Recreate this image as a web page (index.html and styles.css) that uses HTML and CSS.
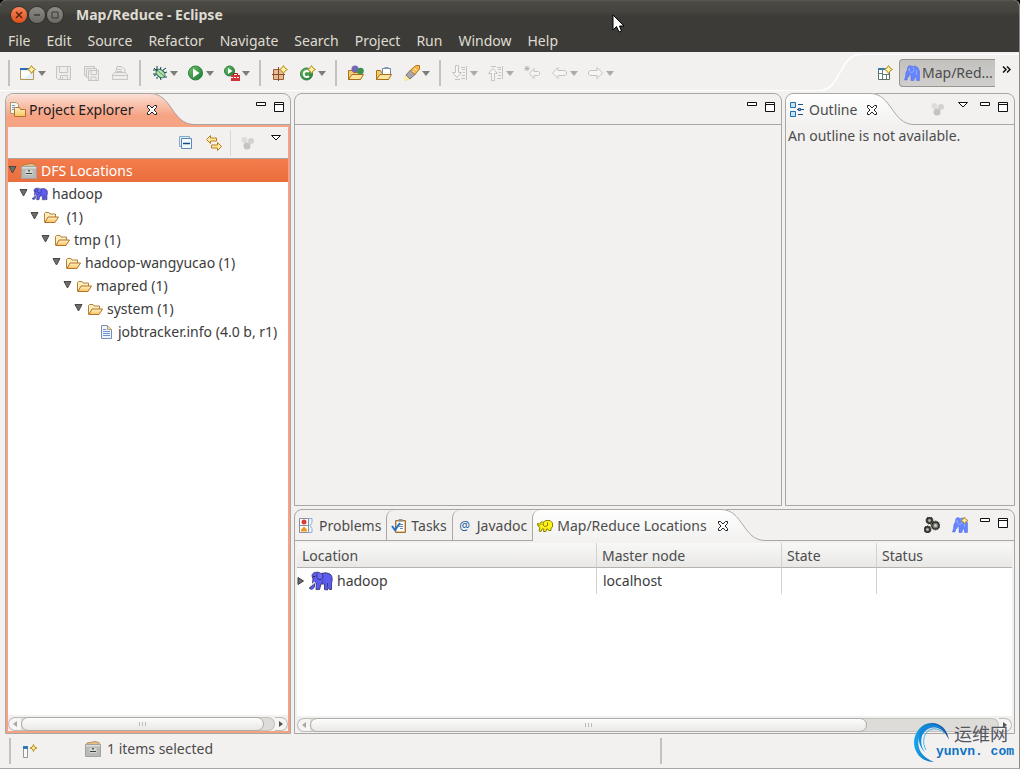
FILE: index.html
```
<!DOCTYPE html>
<html lang="en">
<head>
    <meta charset="UTF-8">
    <meta name="viewport" content="width=device-width, initial-scale=1.0">
    <title>Map/Reduce - Eclipse</title>
    <link rel="stylesheet" href="styles.css">
</head>
<body>
    <!-- Shared icons -->
    <svg class="sprite" aria-hidden="true">
        <defs>
            <linearGradient id="g-folder" x1="0" y1="0" x2="0" y2="1">
                <stop offset="0" stop-color="#fff3c8"/><stop offset="1" stop-color="#f6c35c"/>
            </linearGradient>
            <linearGradient id="g-green" x1="0" y1="0" x2="1" y2="1">
                <stop offset="0" stop-color="#6cc060"/><stop offset="1" stop-color="#1c7a3a"/>
            </linearGradient>
            <linearGradient id="g-orange" x1="0" y1="0" x2="0" y2="1">
                <stop offset="0" stop-color="#fbe0d6"/><stop offset="0.7" stop-color="#f6a383"/><stop offset="1" stop-color="#f6a383"/>
            </linearGradient>
            <linearGradient id="g-white" x1="0" y1="0" x2="0" y2="1">
                <stop offset="0" stop-color="#ffffff"/><stop offset="1" stop-color="#f2f1f0"/>
            </linearGradient>
            <linearGradient id="g-swoosh" x1="0" y1="0" x2="1" y2="0">
                <stop offset="0" stop-color="#16a6ee"/><stop offset="1" stop-color="#0b3f86"/>
            </linearGradient>
        </defs>
        <symbol id="i-arrow" viewBox="0 0 8 16"><path d="M0 6h8L4 11z" fill="#7d7c79"/></symbol>
        <symbol id="i-spark" viewBox="0 0 7 7"><path d="M3.5 0L4.7 2.3 7 3.5 4.7 4.7 3.5 7 2.3 4.7 0 3.5 2.3 2.3z" fill="#fff3b0" stroke="#b8901c" stroke-width="1"/></symbol>
        <symbol id="i-new" viewBox="0 0 16 16">
            <path d="M.5 3.500h13v11H.5z" fill="#e4f1fc" stroke="#b29a52"/>
            <path d="M0 3h10v2H0z" fill="#2f6cb4"/><path d="M1 6h9c0 4-3 7-9 7z" fill="#fff"/>
            <path d="M11.500 .5L13 3l2.500 1.500L13 6l-1.500 2.500L10 6 7.500 4.500 10 3z" fill="#fff2ae" stroke="#b8901c"/>
        </symbol>
        <symbol id="i-save" viewBox="0 0 16 16">
            <g fill="#eeedeb" stroke="#c6c5c2"><path d="M.5 1.500h14v13H2L.5 13z"/><path d="M3.500 1.500h8v6h-8zM4.500 10.500h7v4h-7z"/><path d="M6.500 12v2.500"/></g>
        </symbol>
        <symbol id="i-saveall" viewBox="0 0 16 16">
            <g fill="#eeedeb" stroke="#c6c5c2"><path d="M.5 1.500h10v9H.5z"/><path d="M2.500 3.500h10v9h-10z"/><path d="M4.500 5.500h10v10h-10z"/><path d="M7 5.500h5.500v4H7zM7 12h5v3.500H7z"/></g>
        </symbol>
        <symbol id="i-print" viewBox="0 0 16 16">
            <g fill="#eeedeb" stroke="#c6c5c2"><path d="M3.500 8.500L5 1.500h5l3 3v4z"/><path d="M.5 9.500l2-2h11l2 2v5H.5z"/><path d="M.5 10.500h15M5.500 4.500h4M5 6.500h5"/></g>
        </symbol>
        <symbol id="i-bug" viewBox="0 0 16 16">
            <path d="M5 1v4M1 5h4M1 9h4l-3 2M9 2l-1 3M12 8l3-1M8 12l1 3M12 12h3M5 12v2M2 3l3 3M11 5l3-2" stroke="#17474c" fill="none"/>
            <ellipse cx="8.500" cy="8.500" rx="5" ry="3.600" transform="rotate(40 8.500 8.500)" fill="#b9e0a0" stroke="#1d6a68"/>
            <path d="M4 4l2 .5L5 7z" fill="#17474c"/><path d="M6 6l6 5" stroke="#5b9c7c"/>
        </symbol>
        <symbol id="i-run" viewBox="0 0 16 16"><circle cx="7.500" cy="8" r="7" fill="url(#g-green)" stroke="#2c7f40"/><path d="M5 3.500L11.500 8 5 12.500z" fill="#fff"/></symbol>
        <symbol id="i-ext" viewBox="0 0 16 16">
            <circle cx="5.500" cy="6" r="5" fill="url(#g-green)" stroke="#2c7f40"/><path d="M4 3l4.500 3L4 9z" fill="#fff"/>
            <path d="M9.500 10V8.500h4V10" fill="none" stroke="#a81d1d"/><path d="M7 10h9v6H7z" fill="#cf3434"/><path d="M7 12.500h9" stroke="#fff" stroke-dasharray="2 1"/>
        </symbol>
        <symbol id="i-package" viewBox="0 0 16 16">
            <path d="M1.500 4.500h10v10h-10z" fill="#e5bd90" stroke="#9a5a34"/><path d="M6.500 2v14M0 9.500h13" stroke="#8a4a2c"/>
            <path d="M11.500 .5L13 3l2.500 1.500L13 6l-1.500 2.500L10 6 7.500 4.500 10 3z" fill="#fff2ae" stroke="#b8901c"/>
        </symbol>
        <symbol id="i-class" viewBox="0 0 16 16">
            <circle cx="6.500" cy="9" r="6" fill="url(#g-green)" stroke="#2c7f40"/><path d="M9 7a3 3 0 1 0 0 4" fill="none" stroke="#fff" stroke-width="2"/>
            <path d="M11.500 .5L13 3l2.500 1.500L13 6l-1.500 2.500L10 6 7.500 4.500 10 3z" fill="#fff2ae" stroke="#b8901c"/>
        </symbol>
        <symbol id="i-opentype" viewBox="0 0 16 16">
            <path d="M.5 14.500v-9h4l1 2h7v7z" fill="#f3cb70" stroke="#a8701c"/>
            <circle cx="7" cy="4" r="3.500" fill="#7468b4"/><circle cx="12.500" cy="6" r="3.300" fill="#3b9250"/>
            <path d="M.5 14.500L4 9.500h11.500l-3 5z" fill="#fbe3a0" stroke="#a8701c"/>
        </symbol>
        <symbol id="i-opentask" viewBox="0 0 16 16">
            <path d="M.5 14.500v-9h4l1 2h7v7z" fill="#f3cb70" stroke="#a8701c"/>
            <path d="M6.500 3.500h8v7h-8z" fill="#fff" stroke="#6d83a8"/><path d="M8.500 2h4v2h-4z" fill="#8598b8"/>
            <path d="M.5 14.500L4 9.500h11.500l-3 5z" fill="#fbe3a0" stroke="#a8701c"/>
        </symbol>
        <symbol id="i-search" viewBox="0 0 16 16">
            <path d="M0 16l1.500-6 4.500 4z" fill="#fff3a4" stroke="#ecd77c" stroke-width=".5"/><path d="M2 10l4.500-5 4.500 4.500-5 4.500z" fill="#a9a7ad" stroke="#77747c"/>
            <path d="M6.500 5L12 .5h3.500V4L11 9.500z" fill="#f5b94c" stroke="#b5761c"/><path d="M10.500 3.500l2 2M8.500 6l1.500 1.500" stroke="#fff"/>
        </symbol>
        <symbol id="i-next" viewBox="0 0 16 16"><g fill="#f6f5f4" stroke="#c4c3c0"><path d="M3.500 .5h3v7h3L5 12.500.5 7.500h3z"/><path d="M9 2.500h4M10 4.500h3M11 7.500h2M10 10.500h3M9 13.500h4M14.500 1v14M3 14.500h5"/></g></symbol>
        <symbol id="i-prev" viewBox="0 0 16 16"><g fill="#f6f5f4" stroke="#c4c3c0"><path d="M3.500 15.500h3v-7h3L5 3.500.5 8.500h3z"/><path d="M9 13.500h4M10 10.500h3M11 7.500h2M10 4.500h3M9 2.500h4M14.500 1v13M3 1.500h5"/></g></symbol>
        <symbol id="i-lastedit" viewBox="0 0 16 16"><path d="M5.500 8.500L10 3.500v3h4.500l1 1v2l-1 1H10v3z" fill="#f6f5f4" stroke="#c4c3c0"/><path d="M3 1v5M.5 3.500h5M1 1.500l4 4M5 1.500l-4 4" stroke="#b2b1ae"/></symbol>
        <symbol id="i-back" viewBox="0 0 16 16"><path d="M.5 8L6 2.500v3h7l1.500 1.500v2L13 10.500H6v3z" fill="#f6f5f4" stroke="#c4c3c0"/></symbol>
        <symbol id="i-fwd" viewBox="0 0 16 16"><path d="M14.500 8L9 2.500v3H2L.5 7v2L2 10.500h7v3z" fill="#f6f5f4" stroke="#c4c3c0"/></symbol>
        <symbol id="i-persp" viewBox="0 0 16 16">
            <path d="M1.500 3.500h11v11h-11z" fill="#fff" stroke="#5c6f62"/><path d="M1 3h8v2H1z" fill="#3c77b4"/><path d="M5.500 5v9M5.500 9.500h7M9.500 9.500v5M2 8.500h3" stroke="#5c8277"/>
            <path d="M11.500 .5L13 3l2.500 1.500L13 6l-1.500 2.500L10 6 7.500 4.500 10 3z" fill="#fff2ae" stroke="#b8901c"/>
        </symbol>
        <symbol id="i-elephant" viewBox="0 0 24 20">
            <path d="M6 1.500C4 2 3 3 3 5l1 3-.5 5c0 2-1 3-2.500 3L.5 17.500c2 1.500 4.500.5 5-2.500l.5-4 1.500 1L7 18.500h3.500L12 13h3.500v5.500l3 .5.500-2.500 1.500 2h2V12c1-3 1-6-.5-8-1.500-1.500-4-2.500-7-2l-3 .5C10 1 8 1 6 1.500z" fill="#5d5cf2" stroke="#34356c" stroke-width=".9"/>
            <path d="M8.500 2.500C7 5 8 8.500 11 8.500s3.500-3 2-6" fill="#6a69f6" stroke="#2d2e60" stroke-width=".9"/>
            <path d="M12.500 12.500c1-1 1.500-2 1.500-3M18.500 16v-4" fill="none" stroke="#34356c" stroke-width=".8"/><path d="M4.500 5.500H6" stroke="#15162c"/><path d="M6 11l-3 2.500" stroke="#f4f4f4" stroke-width="1.300"/>
        </symbol>
        <symbol id="i-elephant-up" viewBox="0 0 16 16">
            <path d="M4 1.500L6 .5l2 1 3.500-.5L14 3l1.500 3v9.500h-3L12 12h-1.500l-.5 3.500H7V10L5.500 9 5 11.500H4L3 15H.5l1-3.500L2 7l1-1z" fill="#6485ff" stroke="#4a66e0" stroke-width=".5"/>
            <path d="M5.500 3c-.5 3 .5 4.500 2.500 4.500S10.500 4 9 2M12.500 5v5M4 4.500h1" fill="none" stroke="#a2b5ff" stroke-width=".8"/>
        </symbol>
        <symbol id="i-hadoop" viewBox="0 0 16 16">
            <path d="M.5 5.500l2 .5L4 4h2.500L9 2.500h4l2.500 2.500v4L14 10v2.500h-2.500L11 11H9.500l-.5 2.500H6.500L7 11H5l-1 2.500-2-.5 1-3.500L1 8z" fill="#fff21a" stroke="#8c8400"/>
            <path d="M6.500 4.500c-1 2 0 4 2 4s2.500-2 2-4M4 6v1M1.500 7l1 .5" fill="none" stroke="#7e7700"/>
        </symbol>
        <symbol id="i-folder" viewBox="0 0 16 16">
            <path d="M1.500 13.500v-9l1-1H6l1 1.500h5.500v3" fill="#fdeebd" stroke="#b5803a"/><path d="M2 13.500L5 8h10.500L12 13.500z" fill="url(#g-folder)" stroke="#b5702a"/>
        </symbol>
        <symbol id="i-file" viewBox="0 0 16 16">
            <path d="M3.500 1.500h6l4 4v9h-10z" fill="#eef4fd" stroke="#7c8cb0"/><path d="M9.500 1.500v4h4" fill="#f1d9a0" stroke="#b89f60"/>
            <path d="M5 5.500h3M5 7.500h7M5 9.500h7M5 11.500h7" stroke="#6f92d0"/>
        </symbol>
        <symbol id="i-drawer" viewBox="0 0 16 16">
            <path d="M1 4l1-2 8-1.500 4 1L15 4z" fill="#e6c084" stroke="#8c6c3c" stroke-width=".6"/><path d="M.5 3.500h15v12H.5z" fill="#b9bab7" stroke="#a2a39f"/><path d="M1 4h14v1.500H1z" fill="#dddedb"/>
            <path d="M4.500 7h7v5h-7z" fill="#d6d7d4"/><path d="M5 10.500h6" stroke="#3a463c" stroke-width="1"/><path d="M7 7h2v1.500H7z" fill="#3c6e46"/>
        </symbol>
        <symbol id="i-explorer" viewBox="0 0 16 16">
            <path d="M.5 .5h6l2 2v9h-8z" fill="#f7f5e8" stroke="#a49a78"/><path d="M2 3.500h3M2 5.500h3M2 7.500h2" stroke="#7898c8"/>
            <path d="M4.500 14.500v-8l1-1h4l1 2h5v7z" fill="url(#g-folder)" stroke="#b5702a"/>
        </symbol>
        <symbol id="i-outline" viewBox="0 0 16 16">
            <path d="M.5 .5h5v5h-5zM.5 9.500h5v5h-5z" fill="#c4e4f8" stroke="#1f6fa8"/><path d="M8 2.500h5M7 7.500h1M11 7.500h3M8 12.500h5" stroke="#1d4f84"/><path d="M8.500 6.500h2v2h-2z" fill="#9fd0f0" stroke="#1d4f84"/>
        </symbol>
        <symbol id="i-collapse" viewBox="0 0 16 16"><path d="M1.500 1.500h10v10h-10z" fill="#dcecf8" stroke="#85aacb"/><path d="M3.500 3.500h10v10h-10z" fill="#f2fbff" stroke="#5c89b4"/><path d="M5 8.500h7" stroke="#124a84" stroke-width="1.500"/></symbol>
        <symbol id="i-link" viewBox="0 0 16 16"><g fill="#ffeaa6" stroke="#bb7f16"><path d="M.5 4.500l4-4v2.500h6v3h-6v2.500z"/><path d="M15.500 11.500l-4-4V10h-6v3h6v2.500z"/></g></symbol>
        <symbol id="i-focus" viewBox="0 0 16 16"><circle cx="4.500" cy="5" r="3" fill="#dddcda"/><circle cx="11" cy="6" r="3" fill="#d2d1cf"/><circle cx="7" cy="11" r="3.500" fill="#c4c3c1"/></symbol>
        <symbol id="i-problems" viewBox="0 0 16 16">
            <path d="M.5 .5h9v14h-9z" fill="#fff" stroke="#8a8f9c"/><path d="M0 7.500h10" stroke="#8a8f9c"/><path d="M10 .5h3v4l-2 3 2 3v4h-3" fill="#eaf2fb" stroke="#8fb0dc"/>
            <circle cx="5" cy="4" r="2.500" fill="#d93a3a"/><path d="M5 8.500l3 3v2H2v-2z" fill="#f0981c"/>
        </symbol>
        <symbol id="i-tasks" viewBox="0 0 16 16">
            <path d="M4.500 2.500h10v12h-10z" fill="#e8c28e" stroke="#98743c"/><path d="M6 4h7v9H6z" fill="#fff"/><path d="M7.500 1h4v2.500h-4z" fill="#8a94a8"/><path d="M9 6.500h3M8 8.500h4M9 10.500h3" stroke="#6a86b4"/>
            <path d="M1 8l3 4 5-7" fill="none" stroke="#1b6fc8" stroke-width="2"/>
        </symbol>
        <symbol id="i-gears" viewBox="0 0 16 16">
            <g fill="#777870" stroke="#2e2e2a" stroke-width="1.500"><circle cx="5.500" cy="3.500" r="2.700"/><circle cx="11.500" cy="8.500" r="3.600"/><circle cx="3.500" cy="12.500" r="2.700"/></g>
            <g fill="none" stroke="#2e2e2a" stroke-dasharray="1 1"><circle cx="5.500" cy="3.500" r="3.600"/><circle cx="11.500" cy="8.500" r="4.500"/><circle cx="3.500" cy="12.500" r="3.600"/></g>
            <g fill="#c8c8bc"><circle cx="5.500" cy="3.500" r="1"/><circle cx="11.500" cy="8.500" r="1.500"/><circle cx="3.500" cy="12.500" r="1"/></g>
        </symbol>
        <symbol id="i-fastview" viewBox="0 0 16 16">
            <path d="M1.500 4.500h4v10h-4z" fill="#f4fafe" stroke="#9a9884"/><path d="M1 3h5v3H1z" fill="#3476b8"/>
            <path d="M11.500 1.500L12.500 4l2.500 1-2.500 1-1 2.500-1-2.500L8 5l2.500-1z" fill="#fff2ae" stroke="#b8901c"/>
        </symbol>
        <symbol id="i-close" viewBox="0 0 12 12"><path d="M1.500 1.500h2l2.500 2.500 2.500-2.500h2v2L8 6l2.500 2.500v2h-2L6 8l-2.500 2.500h-2v-2L4 6 1.500 3.500z" fill="#fff" stroke="#222"/></symbol>
        <symbol id="i-min" viewBox="0 0 10 12"><path d="M.5 1.500h9v3h-9z" fill="#fff" stroke="#111"/></symbol>
        <symbol id="i-max" viewBox="0 0 10 12"><path d="M.5 1.500h9v9h-9zM.5 3.500h9" fill="#fff" stroke="#111"/></symbol>
        <symbol id="i-menu" viewBox="0 0 10 12"><path d="M.5 1.500h9L5 6z" fill="#fff" stroke="#111"/></symbol>
        <symbol id="i-open" viewBox="0 0 13 16"><path d="M1 5.500h7L4.500 12z" fill="#6e6d6a" stroke="#4a4946"/></symbol>
    </svg>

    <div class="window">
        <header class="titlebar">
            <div class="title-row">
                <button class="wm wm-close" aria-label="Close"><svg viewBox="0 0 16 16"><path d="M5 5l6 6M11 5l-6 6" stroke="#5a2410" stroke-width="1.500"/></svg></button>
                <button class="wm" aria-label="Minimize"><svg viewBox="0 0 16 16"><path d="M5 8h6" stroke="#3c3b37" stroke-width="1.500"/></svg></button>
                <button class="wm" aria-label="Maximize"><svg viewBox="0 0 16 16"><path d="M5 5h6v6H5z" fill="none" stroke="#3c3b37"/></svg></button>
                <h1>Map/Reduce - Eclipse</h1>
            </div>
            <nav class="menubar">
                <button>File</button>
                <button>Edit</button>
                <button>Source</button>
                <button>Refactor</button>
                <button>Navigate</button>
                <button>Search</button>
                <button>Project</button>
                <button>Run</button>
                <button>Window</button>
                <button>Help</button>
            </nav>
        </header>

        <div class="toolbar">
            <div class="tools">
                <div class="tool-group">
                    <button class="tool drop" aria-label="New"><svg class="ico"><use href="#i-new"/></svg><svg class="arr"><use href="#i-arrow"/></svg></button>
                    <button class="tool" aria-label="Save"><svg class="ico"><use href="#i-save"/></svg></button>
                    <button class="tool" aria-label="Save All"><svg class="ico"><use href="#i-saveall"/></svg></button>
                    <button class="tool" aria-label="Print"><svg class="ico"><use href="#i-print"/></svg></button>
                </div>
                <div class="tool-group">
                    <button class="tool drop" aria-label="Debug"><svg class="ico"><use href="#i-bug"/></svg><svg class="arr"><use href="#i-arrow"/></svg></button>
                    <button class="tool drop" aria-label="Run"><svg class="ico"><use href="#i-run"/></svg><svg class="arr"><use href="#i-arrow"/></svg></button>
                    <button class="tool drop" aria-label="External Tools"><svg class="ico"><use href="#i-ext"/></svg><svg class="arr"><use href="#i-arrow"/></svg></button>
                </div>
                <div class="tool-group">
                    <button class="tool" aria-label="New Package"><svg class="ico"><use href="#i-package"/></svg></button>
                    <button class="tool drop" aria-label="New Class"><svg class="ico"><use href="#i-class"/></svg><svg class="arr"><use href="#i-arrow"/></svg></button>
                </div>
                <div class="tool-group">
                    <button class="tool" aria-label="Open Type"><svg class="ico"><use href="#i-opentype"/></svg></button>
                    <button class="tool" aria-label="Open Task"><svg class="ico"><use href="#i-opentask"/></svg></button>
                    <button class="tool drop" aria-label="Search"><svg class="ico"><use href="#i-search"/></svg><svg class="arr"><use href="#i-arrow"/></svg></button>
                </div>
                <div class="tool-group">
                    <button class="tool drop off" aria-label="Next Annotation"><svg class="ico"><use href="#i-next"/></svg><svg class="arr"><use href="#i-arrow"/></svg></button>
                    <button class="tool drop off" aria-label="Previous Annotation"><svg class="ico"><use href="#i-prev"/></svg><svg class="arr"><use href="#i-arrow"/></svg></button>
                    <button class="tool" aria-label="Last Edit Location"><svg class="ico"><use href="#i-lastedit"/></svg></button>
                    <button class="tool drop off" aria-label="Back"><svg class="ico"><use href="#i-back"/></svg><svg class="arr"><use href="#i-arrow"/></svg></button>
                    <button class="tool drop off" aria-label="Forward"><svg class="ico"><use href="#i-fwd"/></svg><svg class="arr"><use href="#i-arrow"/></svg></button>
                </div>
            </div>
            <svg class="bar-curve" viewBox="0 0 40 41"><path d="M0 38.500C20 38.500 20 2.500 40 2.500" fill="none" stroke="#fff" stroke-width="1.500"/></svg>
            <div class="perspectives">
                <button class="tool" aria-label="Open Perspective"><svg class="ico"><use href="#i-persp"/></svg></button>
                <button class="persp"><svg class="ico"><use href="#i-elephant-up"/></svg><span>Map/Red...</span></button>
                <button class="more" aria-label="More perspectives"><svg viewBox="0 0 9 7"><path d="M1 .5l3 3-3 3M5 .5l3 3-3 3" fill="none" stroke="#111" stroke-width="1.500"/></svg></button>
            </div>
        </div>

        <main class="workbench">
            <section class="panel explorer">
                <div class="tabs">
                    <div class="tab active">
                        <svg class="slope" viewBox="0 0 44 32"><path d="M0 0C22 0 22 31 44 31v1H0z" fill="url(#g-orange)"/><path d="M0 .5C22 .5 22 31.500 44 31.500" fill="none" stroke="#a9a7a4"/></svg>
                        <svg class="ico"><use href="#i-explorer"/></svg><span>Project Explorer</span>
                        <button class="close" aria-label="Close"><svg><use href="#i-close"/></svg></button>
                    </div>
                    <div class="actions">
                        <button aria-label="Minimize"><svg><use href="#i-min"/></svg></button>
                        <button aria-label="Maximize"><svg><use href="#i-max"/></svg></button>
                    </div>
                </div>
                <div class="explorer-body">
                    <div class="view-tools">
                        <button class="tool" aria-label="Collapse All"><svg class="ico"><use href="#i-collapse"/></svg></button>
                        <button class="tool" aria-label="Link with Editor"><svg class="ico"><use href="#i-link"/></svg></button>
                        <span class="divider"></span>
                        <button class="tool" aria-label="Focus"><svg class="ico"><use href="#i-focus"/></svg></button>
                        <button class="tool view-menu" aria-label="View Menu"><svg><use href="#i-menu"/></svg></button>
                    </div>
                    <ul class="tree">
                        <li><div class="row selected"><svg class="twist"><use href="#i-open"/></svg><svg class="ico"><use href="#i-drawer"/></svg><span>DFS Locations</span></div>
                        <ul><li><div class="row"><svg class="twist"><use href="#i-open"/></svg><svg class="ico"><use href="#i-elephant"/></svg><span>hadoop</span></div>
                        <ul><li><div class="row"><svg class="twist"><use href="#i-open"/></svg><svg class="ico"><use href="#i-folder"/></svg><span>&nbsp;(1)</span></div>
                        <ul><li><div class="row"><svg class="twist"><use href="#i-open"/></svg><svg class="ico"><use href="#i-folder"/></svg><span>tmp (1)</span></div>
                        <ul><li><div class="row"><svg class="twist"><use href="#i-open"/></svg><svg class="ico"><use href="#i-folder"/></svg><span>hadoop-wangyucao (1)</span></div>
                        <ul><li><div class="row"><svg class="twist"><use href="#i-open"/></svg><svg class="ico"><use href="#i-folder"/></svg><span>mapred (1)</span></div>
                        <ul><li><div class="row"><svg class="twist"><use href="#i-open"/></svg><svg class="ico"><use href="#i-folder"/></svg><span>system (1)</span></div>
                        <ul><li><div class="row"><svg class="twist"></svg><svg class="ico"><use href="#i-file"/></svg><span>jobtracker.info (4.0 b, r1)</span></div></li></ul>
                        </li></ul></li></ul></li></ul></li></ul></li></ul></li></ul></li>
                    </ul>
                    <div class="scrollbar">
                        <span class="cap left"></span>
                        <span class="track"><span class="thumb wide"></span></span>
                        <span class="cap right"></span>
                    </div>
                </div>
            </section>

            <section class="panel editor">
                <div class="tabs">
                    <div class="actions">
                        <button aria-label="Minimize"><svg><use href="#i-min"/></svg></button>
                        <button aria-label="Maximize"><svg><use href="#i-max"/></svg></button>
                    </div>
                </div>
            </section>

            <section class="panel outline">
                <div class="tabs">
                    <div class="tab active">
                        <svg class="slope" viewBox="0 0 44 32"><path d="M0 0C22 0 22 31 44 31v1H0z" fill="url(#g-white)"/><path d="M0 .5C22 .5 22 31.500 44 31.500" fill="none" stroke="#a9a7a4"/></svg>
                        <svg class="ico"><use href="#i-outline"/></svg><span>Outline</span>
                        <button class="close" aria-label="Close"><svg><use href="#i-close"/></svg></button>
                    </div>
                    <div class="actions">
                        <button class="big last" aria-label="Focus"><svg><use href="#i-focus"/></svg></button>
                        <button aria-label="View Menu"><svg><use href="#i-menu"/></svg></button>
                        <button class="apart" aria-label="Minimize"><svg><use href="#i-min"/></svg></button>
                        <button aria-label="Maximize"><svg><use href="#i-max"/></svg></button>
                    </div>
                </div>
                <p>An outline is not available.</p>
            </section>

            <section class="panel locations">
                <div class="tabs">
                    <button class="tab"><svg class="ico"><use href="#i-problems"/></svg><span>Problems</span></button>
                    <button class="tab"><svg class="ico"><use href="#i-tasks"/></svg><span>Tasks</span></button>
                    <button class="tab"><span class="at">@</span><span>Javadoc</span></button>
                    <div class="tab active">
                        <svg class="slope" viewBox="0 0 44 32"><path d="M0 0C22 0 22 31 44 31v1H0z" fill="url(#g-white)"/><path d="M0 .5C22 .5 22 31.500 44 31.500" fill="none" stroke="#a9a7a4"/></svg>
                        <svg class="ico"><use href="#i-hadoop"/></svg><span>Map/Reduce Locations</span>
                        <button class="close" aria-label="Close"><svg><use href="#i-close"/></svg></button>
                    </div>
                    <div class="actions">
                        <button class="big" aria-label="Edit Hadoop location"><svg><use href="#i-gears"/></svg></button>
                        <button class="big last" aria-label="New Hadoop location"><svg viewBox="0 0 16 16"><use href="#i-elephant-up"/><use href="#i-spark" x="9" y="0" width="7" height="7"/></svg></button>
                        <button aria-label="Minimize"><svg><use href="#i-min"/></svg></button>
                        <button aria-label="Maximize"><svg><use href="#i-max"/></svg></button>
                    </div>
                </div>
                <div class="table-wrap">
                    <table>
                        <thead>
                            <tr><th class="c-loc">Location</th><th class="c-master">Master node</th><th class="c-state">State</th><th>Status</th></tr>
                        </thead>
                        <tbody>
                            <tr>
                                <td><div class="loc"><svg class="shut" viewBox="0 0 8 10"><path d="M1 1.500v7L6.500 5z" fill="#6e6d6a" stroke="#3a3936"/></svg><svg class="eleph"><use href="#i-elephant"/></svg><span>hadoop</span></div></td>
                                <td>localhost</td>
                                <td></td>
                                <td></td>
                            </tr>
                        </tbody>
                    </table>
                </div>
                <div class="scrollbar">
                    <span class="cap left"></span>
                    <span class="track"><span class="thumb"></span></span>
                    <span class="cap right"></span>
                </div>
            </section>
        </main>

        <footer class="statusbar">
            <div class="status-cell fast"><button class="tool" aria-label="Show View as a Fast View"><svg class="ico"><use href="#i-fastview"/></svg></button></div>
            <div class="status-text"><svg class="ico"><use href="#i-drawer"/></svg><span>1 items selected</span></div>
            <div class="status-cell rest"></div>
        </footer>
    </div>

    <div class="watermark">
        <svg viewBox="0 0 40 42">
            <path d="M36 19C34 6 24-1 13 3 3 7-2 20 3 30c3 7 10 11 18 11C10 37 3 28 6 17 10 4 28 0 36 19z" fill="url(#g-swoosh)"/>
            <path d="M33 12C26 3 13 5 9 15c-2 7 0 13 4 17-7-6-9-14-5-22C13 1 27 1 33 12z" fill="#1487dc"/>
            <path d="M31 12C24 5 13 7 11 17c-1 5 0 8 2 12" fill="none" stroke="#4ab8f2"/>
        </svg>
        <div class="wm-text"><span class="cn">运维网</span><span class="site">yunvn. com</span></div>
    </div>
    <svg class="cursor" viewBox="0 0 13 20"><path d="M1 1v15l3.500-3.500L7 18l2.500-1L7.500 12H12z" fill="#fff" stroke="#000"/></svg>
</body>
</html>
```
FILE: styles.css
```
* {
    box-sizing: border-box;
}
body {
    margin: 0;
    background: #000;
    color: #4c4c4c;
    font-family: "Noto Sans", "Open Sans", sans-serif;
    font-size: 14px;
    line-height: 20px;
}
button {
    margin: 0;
    padding: 0;
    border: none;
    background: none;
    color: inherit;
    font: inherit;
}
svg {
    display: block;
    flex: none;
}
.sprite {
    position: absolute;
    width: 0;
    height: 0;
}
.ico {
    width: 16px;
    height: 16px;
}
.window {
    display: flex;
    flex-direction: column;
    height: 100vh;
    background: #f2f1f0;
    border-right: 1px solid #8b8985;
    border-bottom: 1px solid #aaa8a4;
    border-radius: 6px 6px 0 0;
    overflow: hidden;
}

/* Title and menu */
.titlebar {
    background: linear-gradient(#5a5955 0, #4a4944 2px, #45443f 12px, #3c3b37 16px);
    color: #dfdbd2;
}
.title-row {
    display: flex;
    align-items: center;
    gap: 2px;
    height: 30px;
    padding-left: 11px;
}
.wm {
    width: 16px;
    height: 16px;
    border-radius: 50%;
    background: linear-gradient(#8b8a83, #6a6962);
    box-shadow: 0 0 0 1px #33322e;
}
.wm-close {
    background: linear-gradient(#f88458, #e0501c);
}
h1 {
    margin: 0 0 0 11px;
    font-size: 14px;
    font-weight: bold;
}
.menubar {
    display: flex;
    gap: 16px;
    height: 22px;
    padding-left: 8px;
}

/* Main toolbar */
.toolbar {
    display: flex;
    height: 41px;
}
.tools {
    display: flex;
    flex: 1;
    align-items: center;
    gap: 12px;
    height: 39px;
    padding: 4px 0 0 8px;
    border-bottom: 1px solid #fff;
}
.tool-group {
    display: flex;
    align-items: center;
    gap: 12px;
    height: 26px;
    padding-left: 10px;
    border-left: 2px solid #c4c2bf;
}
.tool-group + .tool-group {
    margin-left: -1px;
    padding-left: 11px;
}
.tool {
    display: flex;
    align-items: center;
    gap: 2px;
}
.drop {
    width: 24px;
}
.arr {
    width: 8px;
    height: 16px;
}
.off .arr {
    opacity: 0.6;
}
.bar-curve {
    width: 40px;
    height: 41px;
}
.perspectives {
    display: flex;
    align-items: center;
    height: 39px;
    margin-top: 2px;
    padding: 0 8px 0 17px;
    border-top: 1px solid #fff;
}
.persp {
    display: flex;
    align-items: center;
    gap: 2px;
    width: 96px;
    height: 28px;
    margin: 0 7px 2px 6px;
    padding-left: 4px;
    border: 1px solid #96948f;
    border-right: none;
    border-radius: 4px 0 0 4px;
    background: linear-gradient(#c2c1be, #d0cfcd);
    overflow: hidden;
    white-space: nowrap;
}
.perspectives .tool {
    margin-bottom: 2px;
}
.more {
    width: 9px;
    margin-bottom: 10px;
}

/* Panels */
.workbench {
    display: grid;
    flex: 1;
    grid-template-columns: 286fr 488fr 230fr;
    grid-template-rows: 413fr 225fr;
    gap: 3px;
    min-height: 0;
    padding: 0 4px 0 5px;
}
.panel {
    display: flex;
    flex-direction: column;
    min-width: 0;
    min-height: 0;
    border: 1px solid #a9a7a4;
    border-radius: 8px 8px 0 0;
}
.explorer {
    grid-row: 1 / 3;
}
.locations {
    grid-column: 2 / 4;
}
.tabs {
    display: flex;
    flex: none;
    height: 31px;
    border-bottom: 1px solid #a9a7a4;
}
.tab {
    display: flex;
    align-items: center;
    gap: 3px;
    height: 31px;
    padding: 0 5px 0 4px;
    white-space: nowrap;
}
.tab + .tab {
    border-left: 1px solid #a9a7a4;
    border-top-left-radius: 8px;
}
.tab.active {
    position: relative;
    padding-right: 0;
    border-top-left-radius: 8px;
    background: linear-gradient(#fff, #f2f1f0);
}
.tab.active > * {
    z-index: 1;
}
.tab.active > .slope {
    position: absolute;
    left: calc(100% - 8px);
    top: -1px;
    z-index: 0;
    width: 44px;
    height: 32px;
}
.locations .tab {
    gap: 4px;
}
.explorer .tab.active {
    background: linear-gradient(#fbe0d6, #f6a383 70%);
    color: #1c1c1c;
}
.close {
    width: 12px;
    margin-left: 6px;
}
.close svg {
    width: 12px;
    height: 12px;
}
.explorer .close {
    margin-left: 10px;
}
.at {
    width: 16px;
    color: #1f5f9c;
    font-size: 12px;
    text-align: center;
}
.actions {
    display: flex;
    gap: 8px;
    margin-left: auto;
    padding: 7px 6px 0 0;
}
.actions button {
    width: 10px;
    height: 12px;
}
.actions button svg {
    width: 10px;
    height: 12px;
}
.actions .big {
    width: 16px;
    height: 16px;
    margin-right: 4px;
}
.actions .big svg {
    width: 16px;
    height: 16px;
}
.actions .apart,
.actions .last + button {
    margin-left: 4px;
}
.actions .last {
    margin-right: 0;
}
.outline p {
    margin: 0;
    padding: 1px 2px;
}

/* Project Explorer */
.explorer-body {
    display: flex;
    flex: 1;
    flex-direction: column;
    min-height: 0;
    border: 2px solid #f6a383;
    background: #fff;
}
.view-tools {
    display: flex;
    flex: none;
    align-items: center;
    justify-content: flex-end;
    gap: 12px;
    height: 32px;
    padding-right: 7px;
    border-bottom: 1px solid #a9a7a4;
    background: #f2f1f0;
}
.divider {
    width: 1px;
    height: 26px;
    margin: 0 -3px 0 -4px;
    background: #dad8d5;
}
.view-menu svg {
    width: 10px;
    height: 12px;
}
.view-menu {
    margin-bottom: 6px;
    margin-left: 3px;
}
.tree {
    flex: 1;
    min-height: 0;
    overflow: hidden;
    color: #3c3c3c;
}
.tree,
.tree ul {
    margin: 0;
    padding: 0;
    list-style: none;
}
.tree ul {
    padding-left: 11px;
}
.row {
    display: flex;
    align-items: center;
    height: 23px;
    white-space: nowrap;
}
.row span {
    margin-left: 4px;
}
.twist {
    width: 13px;
    height: 16px;
    margin-bottom: 4px;
}
.selected {
    background: linear-gradient(#f47c4c, #ea6e3c);
    color: #fff;
}

/* Scrollbars */
.scrollbar {
    display: flex;
    flex: none;
    height: 16px;
    padding-top: 2px;
    background: #f2f1f0;
}
.cap {
    display: flex;
    align-items: center;
    justify-content: center;
    width: 13px;
    border: 1px solid #bdbbb8;
    background: #f6f5f4;
}
.cap.left {
    border-right: none;
    border-radius: 7px 0 0 7px;
}
.cap.right {
    border-left: none;
    border-radius: 0 7px 7px 0;
}
.cap::before {
    border: 3px solid transparent;
    content: "";
}
.cap.left::before {
    margin-right: 3px;
    border-right: 4px solid #aaa8a5;
}
.cap.right::before {
    margin-left: 3px;
    border-left: 4px solid #55534f;
}
.track {
    flex: 1;
    border: 1px solid #c4c2bf;
    border-left: none;
    border-radius: 0 7px 7px 0;
    background: #dddcd9;
}
.thumb {
    display: flex;
    align-items: center;
    justify-content: center;
    width: 81%;
    height: 14px;
    margin-top: -1px;
    border: 1px solid #aeaca9;
    border-radius: 7px;
    background: linear-gradient(#fdfdfd, #e9e8e6);
}
.thumb.wide {
    width: 96%;
}
.thumb::before {
    width: 7px;
    height: 4px;
    background: repeating-linear-gradient(90deg, #bcbab7 0 1px, transparent 1px 3px);
    content: "";
}

/* Locations table */
.table-wrap {
    flex: 1;
    min-height: 0;
    margin: 2px 2px 0;
    background: #fff;
}
.locations .scrollbar {
    margin: 0 2px 1px;
}
table {
    width: 100%;
    border-collapse: separate;
    border-spacing: 0;
    table-layout: fixed;
}
.c-loc {
    width: 300px;
}
.c-master {
    width: 185px;
}
.c-state {
    width: 95px;
}
th {
    height: 25px;
    padding: 1px 5px 0;
    border-bottom: 1px solid #b5b3b0;
    background: linear-gradient(#f8f8f7, #e9e8e6);
    font-weight: normal;
    text-align: left;
}
td {
    height: 26px;
    padding: 0 6px;
    color: #3c3c3c;
}
th:not(:last-child),
td:not(:last-child) {
    border-right: 1px solid #d4d2cf;
}
td:first-child {
    padding-left: 0;
}
.loc {
    display: flex;
    align-items: center;
    gap: 4px;
}
.shut {
    width: 8px;
    height: 10px;
}
.eleph {
    width: 24px;
    height: 20px;
}

/* Status bar */
.statusbar {
    display: flex;
    flex: none;
    align-items: center;
    height: 34px;
    padding-left: 9px;
}
.status-cell {
    display: flex;
    align-items: center;
    height: 26px;
    padding-left: 11px;
    border-left: 2px solid #c4c2bf;
}
.fast {
    width: 76px;
}
.status-text {
    display: flex;
    flex: 576;
    align-items: center;
    gap: 6px;
    padding-bottom: 4px;
}
.rest {
    flex: 346;
}

/* Overlays */
.watermark {
    position: absolute;
    right: 6px;
    bottom: 6px;
    display: flex;
}
.watermark svg {
    width: 40px;
    height: 42px;
    margin-right: -17px;
}
.wm-text {
    display: flex;
    flex-direction: column;
    align-items: flex-end;
}
.cn {
    padding-right: 6px;
    color: #55555f;
    font-family: "Noto Sans CJK SC", sans-serif;
    font-size: 18px;
    line-height: 24px;
}
.site {
    color: #0f72c4;
    font-family: "Liberation Mono", monospace;
    font-size: 13px;
    font-weight: bold;
    line-height: 14px;
}
.cursor {
    position: absolute;
    left: 60%;
    top: 14px;
    width: 13px;
    height: 20px;
}
```
